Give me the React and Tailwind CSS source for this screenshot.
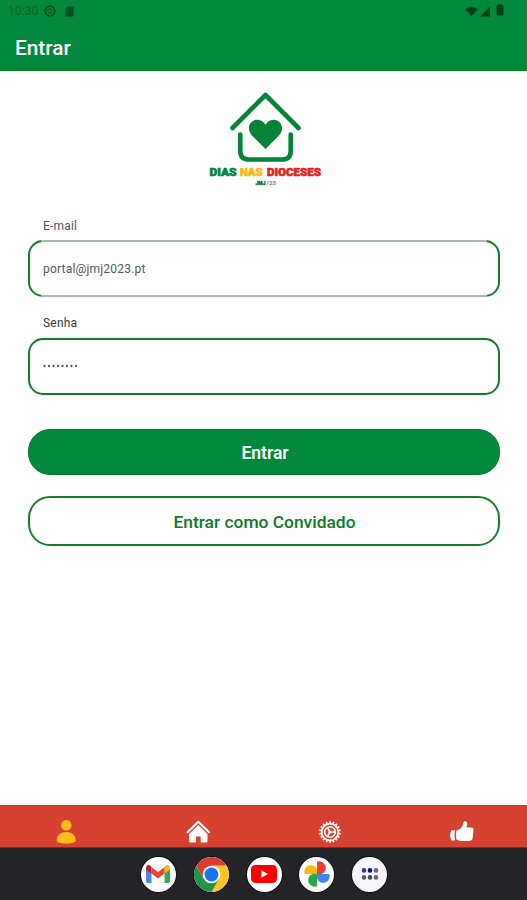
function StatusBar() {
  return (
    <div className="flex h-[22px] items-center justify-between pl-2 pr-[23px] text-[#034f20]">
      <div className="flex items-center">
        <span className="w-[31px] whitespace-nowrap text-[12px] leading-none tracking-[0.1px] text-[#04652b]">10:30</span>
        <svg className="ml-[5px]" width="12" height="12" viewBox="0 0 12 12" fill="none" stroke="currentColor">
          <circle cx="6" cy="6" r="4.8" strokeWidth="1.8" />
          <path d="M3.5 6.2a2.5 2.5 0 0 1 5 0M4 8h4M6 5v2" strokeWidth="1" />
        </svg>
        <svg className="ml-[9px]" width="9" height="11" viewBox="0 0 9 11" fill="currentColor">
          <path d="M3 .5h5q.7 0 .7.7v8.500q0 .7-.7.7H1q-.7 0-.7-.7V3.200z" />
        </svg>
      </div>
      <div className="flex items-center text-[#03421b]">
        <svg width="13" height="11" viewBox="0 0 13 11" fill="currentColor">
          <path d="M.2 3.200Q6.500-1.800 12.800 3.200L6.500 10z" />
        </svg>
        <svg className="ml-[2px]" width="10" height="11" viewBox="0 0 10 11" fill="currentColor">
          <path d="M10 .5v10H0z" />
        </svg>
        <svg className="mb-[2px] ml-[6px]" width="8" height="12" viewBox="0 0 7 12" fill="currentColor">
          <path d="M2 0h3v1h1q1 0 1 1v8.500q0 1-1 1H1q-1 0-1-1V2q0-1 1-1h1z" />
        </svg>
      </div>
    </div>
  );
}

function Logo() {
  return (
    <svg className="mx-auto block" width="120" height="100" viewBox="204 90 120 100" role="img" aria-label="Dias nas Dioceses">
      <g fill="none" stroke="#048339" strokeWidth="4.6" strokeLinecap="round" strokeLinejoin="round">
        <path d="M232.500 128 265.500 95 298.500 128" />
        <path d="M240.300 134.500v16.500q0 8.500 8.500 8.500h33.400q8.500 0 8.500-8.500v-16.500" />
      </g>
      <path
        fill="#048339"
        d="M265.500 149 252 135.500C244.500 126.500 252 119.500 257.500 119.700C261.500 119.800 264 122 265.500 124.800C267 122 269.500 119.800 273.500 119.700C279 119.500 286.500 126.500 279 135.500Z"
      />
      <g fontFamily="Roboto, sans-serif" fontWeight="900" fontSize="10.5" strokeWidth="0.600">
        <text x="209.500" y="176.300" textLength="27" lengthAdjust="spacingAndGlyphs" fill="#048339" stroke="#048339">DIAS</text>
        <text x="239.700" y="176.300" textLength="23" lengthAdjust="spacingAndGlyphs" fill="#fbb814" stroke="#fbb814">NAS</text>
        <text x="267" y="176.300" textLength="54" lengthAdjust="spacingAndGlyphs" fill="#e51e20" stroke="#e51e20">DIOCESES</text>
      </g>
      <g fontFamily="Roboto, sans-serif" fontSize="5.500">
        <text x="255.500" y="184.800" fontWeight="900" textLength="10" lengthAdjust="spacingAndGlyphs" fill="#087638" stroke="#087638" strokeWidth=".4">JMJ</text>
        <text x="266.500" y="184.800" textLength="9.500" lengthAdjust="spacingAndGlyphs" fill="#a56c70" stroke="#a56c70" strokeWidth=".2">/23</text>
      </g>
    </svg>
  );
}

function PersonIcon() {
  return (
    <svg width="26" height="26" viewBox="0 0 26 26" fill="#f7be18">
      <circle cx="13.300" cy="6.300" r="5.200" />
      <path d="M3.800 21.300C3.800 16.200 8 13 13.300 13s9.500 3.200 9.500 8.300c0 2.300-4.300 3.200-9.500 3.200s-9.500-.9-9.500-3.200z" />
    </svg>
  );
}

function HomeIcon() {
  return (
    <svg width="26" height="26" viewBox="0 0 26 26">
      <path d="M2.500 13.200 13.300 2.700 24.100 13.200" fill="none" stroke="#fff" strokeWidth="2" strokeLinecap="round" strokeLinejoin="round" />
      <path d="M13.300 6 22.500 15v7.200q0 1.300-1.300 1.300h-5.500V17.500h-4.800v6H5.400q-1.300 0-1.300-1.300V15z" fill="#fff" />
    </svg>
  );
}

const TEETH = Array.from({ length: 18 }, (_, i) => i * 20);

function CogIcon() {
  return (
    <svg width="26" height="26" viewBox="-14 -13 26 26" fill="none" stroke="#fff">
      {TEETH.map((angle) => (
        <path key={angle} d="M0-8.500V-10.800" strokeWidth="1.700" transform={`rotate(${angle})`} />
      ))}
      <circle r="8.300" strokeWidth="1.800" />
      <circle r="5.300" strokeWidth="1.600" />
      <path d="M0 0H5M0 0-2.700-4.700M0 0-2.700 4.700" strokeWidth="1.600" />
      <circle r="1.600" fill="#fff" stroke="none" />
    </svg>
  );
}

function ThumbIcon() {
  return (
    <svg width="26" height="26" viewBox="-.7 -.3 26 26" fill="#fff">
      <path d="M2.800 11h3.500q-1.200 5 0 10.300H2.800Q.2 16.500 2.800 11z" />
      <path d="M7.700 11.500 12.500 8.700Q14.500 6.500 14.700 3.300Q15 1.500 16.300 1.700Q19.300 2.400 18.300 6.300L17.700 8.200H22.500Q25 8.400 24.700 11L24 18.500Q23.500 21.700 20.500 21.700H14Q10.500 21.700 7.700 20.200Q6.600 16 7.700 11.500z" />
    </svg>
  );
}

function AppIcon({ children, className = "bg-white" }) {
  return (
    <div className={`flex size-[35px] items-center justify-center overflow-hidden rounded-full ring-1 ring-[#101014] ${className}`}>
      {children}
    </div>
  );
}

function Dock() {
  return (
    <div className="flex h-[52px] items-center justify-center gap-[17.800px] bg-[#242428] pl-px">
      <AppIcon>
        <svg width="24" height="18" viewBox="0 0 24 18">
          <path d="M0 3v13q0 2 2 2h3.500V7z" fill="#4285f4" />
          <path d="M18.500 7v11H22q2 0 2-2V3z" fill="#34a853" />
          <path d="M18.500 2.200V8.500L24 4.400V3c0-3-3-3.700-4.500-2.200z" fill="#fbbc04" />
          <path d="M5.500 8.500V2.200L12 7l6.500-4.800v6.300L12 13.400z" fill="#ea4335" />
          <path d="M0 3v1.400l5.500 4.100V2.200L4.500.8C3-.7 0 0 0 3z" fill="#c5221f" />
        </svg>
      </AppIcon>
      <AppIcon>
        <svg width="35" height="35" viewBox="-18 -18 36 36">
          <path d="M-15.600-9A18 18 0 0 1 15.600-9H0L-7.800 4.500z" fill="#db3b2b" />
          <path d="M15.600-9A18 18 0 0 1 0 18L7.800 4.500 0-9z" fill="#fdc322" />
          <path d="M0 18A18 18 0 0 1-15.600-9L-7.800 4.500H7.800z" fill="#229447" />
          <circle r="9" fill="#fff" />
          <circle r="7.100" fill="#1a73e8" />
        </svg>
      </AppIcon>
      <AppIcon>
        <svg width="26" height="18" viewBox="0 0 26 18">
          <rect width="26" height="18" rx="4.500" fill="#fa0008" />
          <path d="M10.300 5.200v7.600L17 9z" fill="#fff" />
        </svg>
      </AppIcon>
      <AppIcon>
        <svg width="26" height="26" viewBox="0 0 26 26">
          <path d="M13 .8V13H17.600A6.300 6.300 0 0 0 13 .8z" fill="#e84235" />
          <path d="M25.200 13H13V17.600A6.300 6.300 0 0 0 25.200 13z" fill="#4285f4" />
          <path d="M13 25.200V13H8.400A6.300 6.300 0 0 0 13 25.200z" fill="#28a74a" />
          <path d="M.8 13H13V8.400A6.300 6.300 0 0 0 .8 13z" fill="#f8b90a" />
        </svg>
      </AppIcon>
      <AppIcon className="bg-[#f7f5fc]">
        <svg width="18" height="12" viewBox="0 0 18 12">
          <circle cx="3" cy="2.400" r="2.300" fill="#283a88" />
          <circle cx="9" cy="2.400" r="2.300" fill="#10107d" />
          <circle cx="15" cy="2.400" r="2.300" fill="#73658b" />
          <circle cx="3" cy="9.400" r="2.300" fill="#5b5878" />
          <circle cx="9" cy="9.400" r="2.300" fill="#494778" />
          <circle cx="15" cy="9.400" r="2.300" fill="#69637f" />
        </svg>
      </AppIcon>
    </div>
  );
}

export default function App() {
  return (
    <div className="flex h-[900px] w-[527px] flex-col bg-white font-[Roboto,sans-serif]">
      <header className="h-[71px] border-b border-[#087b25] bg-[#02883d]">
        <StatusBar />
        <h1 className="pl-[15px] pt-[13px] text-[20.800px] font-medium leading-[26px] text-white">Entrar</h1>
      </header>

      <main className="flex flex-1 flex-col px-7 pt-[19px]">
        <Logo />
        <label htmlFor="email" className="mt-[28px] pl-[15px] text-[12px] leading-4 tracking-[0.2px] text-[#54565a]">E-mail</label>
        <div className="relative mt-[6px] h-[57px] w-[472px]">
          <input
            id="email"
            type="text"
            defaultValue="portal@jmj2023.pt"
            className="size-full rounded-[15px] border-2 border-[#187c27] px-[13px] text-[12px] tracking-[0.2px] text-[#55575c] outline-none"
          />
          <span className="absolute inset-x-[13px] top-0 h-[2px] bg-[#a3bdaf]" />
          <span className="absolute inset-x-[13px] bottom-0 h-[2px] bg-[#a3bdaf]" />
        </div>
        <label htmlFor="password" className="mt-[18px] pl-[15px] text-[12px] leading-4 tracking-[0.2px] text-[#38393c]">Senha</label>
        <div id="password" className="mt-[7px] flex h-[57px] w-[472px] items-center rounded-[15px] border-2 border-[#187c27] pb-px pl-[13px]">
          <svg width="36" height="4" viewBox="0 0 36 4" fill="#55575c" aria-label="Senha oculta">
            {Array.from({ length: 8 }, (_, i) => (
              <circle key={i} cx={1.5 + i * 4.5} cy="2" r="1.150" />
            ))}
          </svg>
        </div>
        <button className="mt-[34px] h-[46px] w-[472px] rounded-[22px] border border-[#087b25] bg-[#02883d] pl-[2px] pt-[3px] text-[17.500px] font-semibold text-white">Entrar</button>
        <button className="mt-[21px] h-[50px] w-[472px] rounded-[22px] border-2 border-[#197c2b] bg-white pl-px pt-[2px] text-[17.400px] font-medium text-[#0d7928]">Entrar como Convidado</button>
      </main>

      <nav className="grid h-[43px] grid-cols-4 justify-items-center border-b border-[#792c29] border-t border-t-[#c93d25] bg-[#d64132] pt-[12.500px] text-white">
        <PersonIcon />
        <HomeIcon />
        <CogIcon />
        <ThumbIcon />
      </nav>
      <Dock />
    </div>
  );
}
